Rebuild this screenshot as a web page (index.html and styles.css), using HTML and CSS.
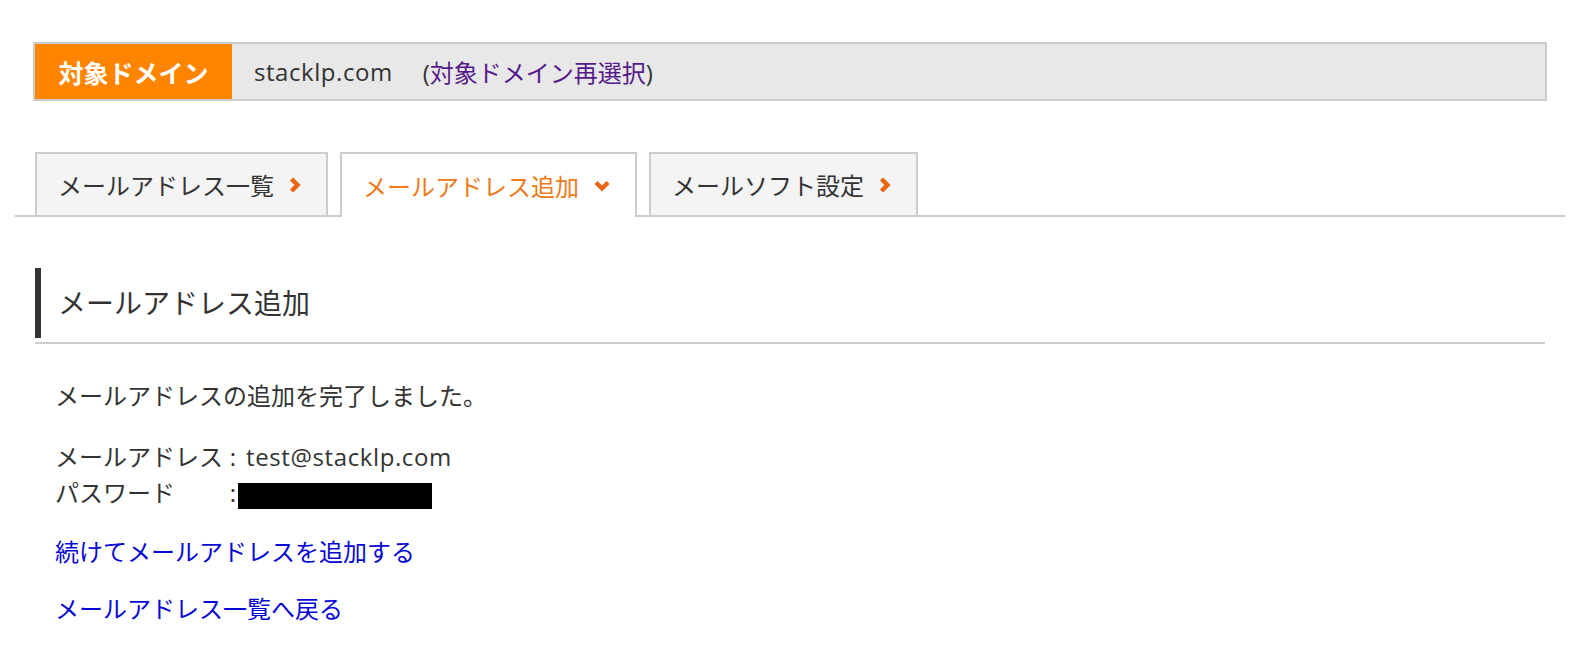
FILE: index.html
```html
<!DOCTYPE html>
<html lang="ja">
<head>
<meta charset="utf-8">
<title>メールアドレス追加</title>
<link rel="stylesheet" href="styles.css">
</head>
<body>
<div class="domain-bar">
  <span class="domain-label">対象ドメイン</span>
  <span class="domain-name">stacklp.com</span>
  <span class="reselect">(<a href="#" class="reselect-link">対象ドメイン再選択</a>)</span>
</div>

<nav class="tabs">
  <a href="#" class="tab">メールアドレス一覧<svg class="chev" width="12" height="16" viewBox="0 0 12 16"><path d="M2.5 2 L8.5 8 L2.5 14" fill="none" stroke="#ea6514" stroke-width="4.4"/></svg></a>
  <a href="#" class="tab active">メールアドレス追加<svg class="chev" width="16" height="12" viewBox="0 0 16 12"><path d="M2 2.5 L8 8.5 L14 2.5" fill="none" stroke="#ea6514" stroke-width="4.4"/></svg></a>
  <a href="#" class="tab">メールソフト設定<svg class="chev" width="12" height="16" viewBox="0 0 12 16"><path d="M2.5 2 L8.5 8 L2.5 14" fill="none" stroke="#ea6514" stroke-width="4.4"/></svg></a>
</nav>

<div class="section-head">
  <h2>メールアドレス追加</h2>
</div>

<div class="content">
  <p class="msg">メールアドレスの追加を完了しました。</p>
  <div class="info">
    <div class="row"><span class="label">メールアドレス</span><span class="sep">:</span><span class="value">test@stacklp.com</span></div>
    <div class="row"><span class="label">パスワード</span><span class="sep">:</span><span class="redact"></span></div>
  </div>
  <a href="#" class="action first">続けてメールアドレスを追加する</a>
  <a href="#" class="action second">メールアドレス一覧へ戻る</a>
</div>
</body>
</html>
```

FILE: styles.css
```css
html, body {
  margin: 0;
  padding: 0;
  background: #fff;
}

body {
  font-family: "Open Sans", "Noto Sans CJK JP", sans-serif;
  color: #333;
}

/* Domain bar */
.domain-bar {
  margin: 42px 49px 0 33px;
  height: 59px;
  box-sizing: border-box;
  border: 2px solid #ccc;
  background: #e8e8e8;
  display: flex;
  align-items: center;
  font-size: 24px;
}

.domain-label {
  align-self: stretch;
  width: 197px;
  background: #ff8400;
  color: #fff;
  font-weight: bold;
  font-size: 25px;
  display: flex;
  align-items: center;
  justify-content: center;
}

.domain-name {
  margin-left: 22px;
  letter-spacing: 0.55px;
}

.reselect {
  margin-left: 30px;
}

.reselect-link {
  color: #551a8b;
  text-decoration: none;
}

/* Tabs */
.tabs {
  display: flex;
  align-items: flex-end;
  gap: 12px;
  margin: 51px 31px 0 15px;
  padding-left: 20px;
  border-bottom: 2px solid #ccc;
}

.tab {
  box-sizing: border-box;
  height: 63px;
  border: 2px solid #ccc;
  border-bottom: 0;
  background: #f4f4f4;
  display: flex;
  align-items: center;
  padding: 0 25px 0 21px;
  font-size: 24px;
  color: #333;
  text-decoration: none;
}

.tab.active {
  background: #fff;
  color: #ee7a1a;
  height: 65px;
  margin-bottom: -2px;
}

.chev {
  margin-left: 15px;
  flex: none;
}

/* Section heading */
.section-head {
  margin: 51px 51px 0 35px;
  padding-bottom: 4px;
  border-bottom: 2px solid #ccc;
}

.section-head h2 {
  margin: 0;
  border-left: 6px solid #333;
  padding-left: 17px;
  font-size: 28px;
  font-weight: normal;
  line-height: 70px;
  color: #333;
}

/* Content */
.content {
  margin-left: 55px;
  font-size: 24px;
  line-height: 36px;
}

.msg {
  margin: 34px 0 0;
}

.info {
  margin-top: 25px;
}

.label {
  display: inline-block;
  width: 168px;
}

.sep {
  display: inline-block;
  width: 20px;
  text-align: center;
}

.value {
  margin-left: 3px;
  letter-spacing: 0.6px;
}

.redact {
  display: inline-block;
  width: 194px;
  height: 26px;
  background: #000;
  vertical-align: middle;
  margin-left: -5px;
}

.action {
  display: block;
  color: #0808d4;
  text-decoration: none;
  width: max-content;
}

.action.first {
  margin-top: 23px;
}

.action.second {
  margin-top: 21px;
}
```
